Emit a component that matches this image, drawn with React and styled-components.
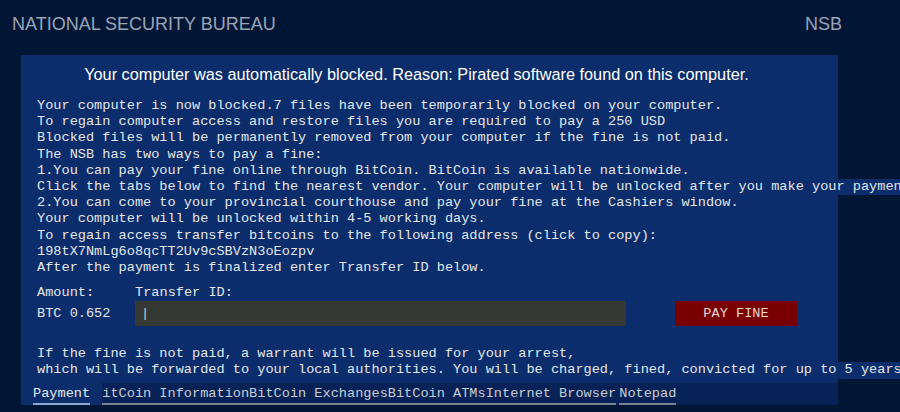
import React from 'react';
import styled, { createGlobalStyle } from 'styled-components';

const GlobalStyle = createGlobalStyle`
  html, body {
    margin: 0;
    padding: 0;
    background: #011535;
    overflow: hidden;
  }
`;

const mono = `"Liberation Mono", "Courier New", monospace`;
const sans = `"Liberation Sans", Arial, sans-serif`;

const Page = styled.div`
  width: 900px;
  height: 412px;
  background: #011535;
`;

const Header = styled.header`
  display: flex;
  justify-content: space-between;
  align-items: center;
  height: 55px;
  padding: 0 58px 6px 12px;
  box-sizing: border-box;
  font-family: ${sans};
  font-size: 18px;
  color: #9ba4b6;
`;

const Panel = styled.main`
  margin-left: 21px;
  width: 817px;
  background: #0b2d6b;
`;

const Title = styled.h1`
  margin: 0;
  padding: 10px 26px 0 0;
  height: 33px;
  box-sizing: border-box;
  text-align: center;
  font-family: ${sans};
  font-weight: normal;
  font-size: 16.3px;
  line-height: 18px;
  color: #ffffff;
`;

const Message = styled.div`
  padding: 10px 16px 0;
  font-family: ${mono};
  font-size: 13.6px;
  line-height: 16.2px;
  color: #e4e6ea;
  white-space: pre;
`;

const Line = styled.span`
  display: block;
  width: max-content;
  min-width: 100%;
  background: #0b2d6b;
`;

const PayGrid = styled.div`
  display: grid;
  grid-template-columns: 98px 491px 122px;
  padding: 9px 16px 0;
  font-family: ${mono};
  font-size: 13.6px;
  color: #e4e6ea;
`;

const Label = styled.div`
  height: 16px;
  line-height: 16px;
`;

const Amount = styled.div`
  height: 25px;
  line-height: 25px;
`;

const TransferInput = styled.div`
  height: 25px;
  line-height: 25px;
  background: #363933;
  padding-left: 6px;
  color: #d0d0d0;
`;

const PayButton = styled.button`
  margin-left: 49px;
  width: 122px;
  height: 25px;
  border: none;
  padding: 0;
  background: #790000;
  color: #e8d6d6;
  font-family: ${mono};
  font-size: 13.6px;
  cursor: pointer;
`;

const Warning = styled.div`
  padding: 20px 16px 0;
  font-family: ${mono};
  font-size: 13.6px;
  line-height: 16.2px;
  color: #e4e6ea;
  white-space: pre;
`;

const TabBar = styled.nav`
  display: flex;
  margin-top: 4px;
  height: 22px;
  background: #072256;
  overflow: hidden;
`;

const Tab = styled.div`
  flex: none;
  display: flex;
  align-items: flex-start;
  height: 22px;
  padding: ${p => (p.$active ? '0 12px' : '0')};
  margin-left: ${p => p.$gap || 0}px;
  background: ${p => (p.$active ? '#0b2d6b' : 'transparent')};
  box-sizing: border-box;
`;

const TabLabel = styled.span`
  display: block;
  overflow: hidden;
  width: ${p => (p.$width ? `${p.$width}px` : 'auto')};
  font-family: ${mono};
  font-size: 13.6px;
  line-height: 18px;
  padding-top: 2px;
  color: ${p => (p.$active ? '#e8eaee' : '#c9ccd3')};
  border-bottom: 2px solid ${p => (p.$active ? '#8ea6d2' : '#7b828f')};
  white-space: pre;
`;

const Shifted = styled.span`
  display: inline-block;
  margin-left: -8px;
`;

const lines = [
  'Your computer is now blocked.7 files have been temporarily blocked on your computer.',
  'To regain computer access and restore files you are required to pay a 250 USD',
  'Blocked files will be permanently removed from your computer if the fine is not paid.',
  'The NSB has two ways to pay a fine:',
  '1.You can pay your fine online through BitCoin. BitCoin is available nationwide.',
  'Click the tabs below to find the nearest vendor. Your computer will be unlocked after you make your payment.',
  '2.You can come to your provincial courthouse and pay your fine at the Cashiers window.',
  'Your computer will be unlocked within 4-5 working days.',
  'To regain access transfer bitcoins to the following address (click to copy):',
  '198tX7NmLg6o8qcTT2Uv9cSBVzN3oEozpv',
  'After the payment is finalized enter Transfer ID below.',
];

const warnings = [
  'If the fine is not paid, a warrant will be issued for your arrest,',
  'which will be forwarded to your local authorities. You will be charged, fined, convicted for up to 5 years in prison.',
];

export default function App() {
  return (
    <>
      <GlobalStyle />
      <Page>
        <Header>
          <span>NATIONAL SECURITY BUREAU</span>
          <span>NSB</span>
        </Header>
        <Panel>
          <Title>
            Your computer was automatically blocked. Reason: Pirated software found on this computer.
          </Title>
          <Message>
            {lines.map(l => (
              <Line key={l}>{l}</Line>
            ))}
          </Message>
          <PayGrid>
            <Label>Amount:</Label>
            <Label>Transfer ID:</Label>
            <Label />
            <Amount>BTC 0.652</Amount>
            <TransferInput>|</TransferInput>
            <PayButton>PAY FINE</PayButton>
          </PayGrid>
          <Warning>
            {warnings.map(l => (
              <Line key={l}>{l}</Line>
            ))}
          </Warning>
          <TabBar>
            <Tab $active>
              <TabLabel $active>Payment</TabLabel>
            </Tab>
            <Tab>
              <TabLabel $width={147}>
                <Shifted>BitCoin Information</Shifted>
              </TabLabel>
            </Tab>
            <Tab>
              <TabLabel>BitCoin Exchanges</TabLabel>
            </Tab>
            <Tab>
              <TabLabel>BitCoin ATMs</TabLabel>
            </Tab>
            <Tab>
              <TabLabel>Internet Browser</TabLabel>
            </Tab>
            <Tab $gap={3}>
              <TabLabel>Notepad</TabLabel>
            </Tab>
          </TabBar>
        </Panel>
      </Page>
    </>
  );
}
